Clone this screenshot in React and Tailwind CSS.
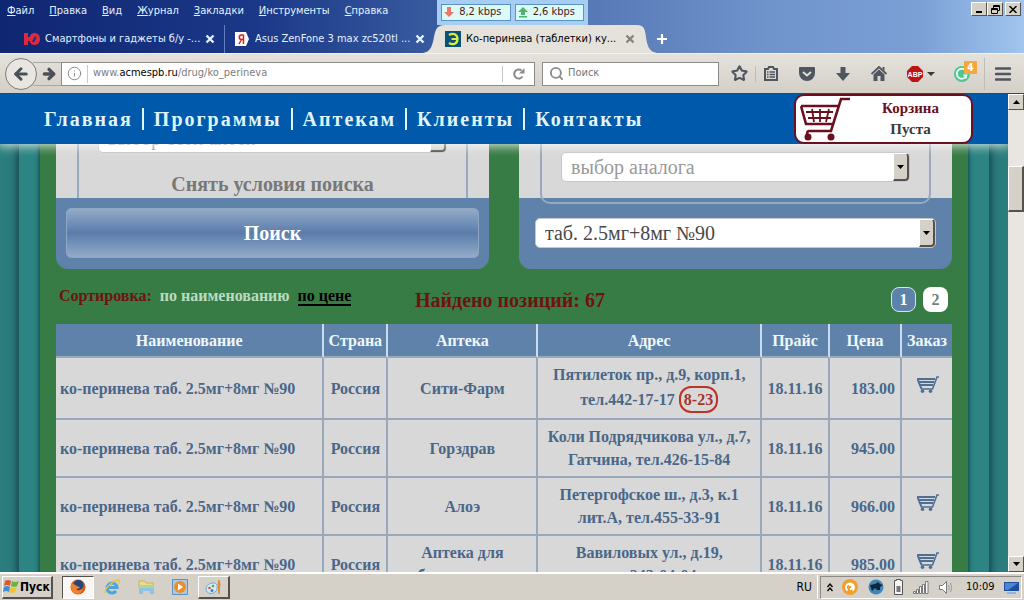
import React from 'react';
import { ArrowLeft, ArrowRight, Info, Search, Star } from 'lucide-react';

const MENU = ['Файл', 'Правка', 'Вид', 'Журнал', 'Закладки', 'Инструменты', 'Справка'];

const NAV = ['Главная', 'Программы', 'Аптекам', 'Клиенты', 'Контакты'];

const OFFERS = [
  { id: 1, pharmacy: ['Сити-Фарм'], address: ['Пятилеток пр., д.9, корп.1,', 'тел.442-17-17'], hours: '8-23', price: '183.00', order: true },
  { id: 2, pharmacy: ['Горздрав'], address: ['Коли Подрядчикова ул., д.7,', 'Гатчина, тел.426-15-84'], price: '945.00', order: false },
  { id: 3, pharmacy: ['Алоэ'], address: ['Петергофское ш., д.3, к.1', 'лит.А, тел.455-33-91'], price: '966.00', order: true },
  { id: 4, pharmacy: ['Аптека для', 'бережливых'], address: ['Вавиловых ул., д.19,', 'тел.243-04-04'], price: '985.00', order: true }
];

const raised = 'border border-t-white border-l-white border-r-[#55524c] border-b-[#55524c] bg-[#d5d1c9]';

const Triangle = ({ up }) => (
  <svg width="7" height="4" viewBox="0 0 7 4">
    <path d={up ? 'M0 4L3.5 0L7 4Z' : 'M0 0H7L3.5 4Z'} fill="#000" />
  </svg>
);

const CloseIcon = ({ color }) => (
  <svg width="10" height="10" viewBox="0 0 10 10">
    <path d="M1.5 1.5L8.5 8.5M8.5 1.5L1.5 8.5" stroke={color} strokeWidth="2.4" />
  </svg>
);

const MenuBar = () => (
  <div className="flex h-[22px] items-start justify-between pr-[3px] pl-[7px]">
    <nav className="flex gap-[15px] pt-1 leading-[14px] text-[#e4f2ff]">
      {MENU.map(item => (
        <button key={item} type="button">
          <span className="underline">{item[0]}</span>{item.slice(1)}
        </button>
      ))}
    </nav>
    <div className="flex pt-[2px]">
      <button type="button" aria-label="Свернуть" className={`flex h-[14px] w-4 items-end justify-center pb-[2px] ${raised}`}>
        <svg width="6" height="2"><path d="M0 0H6V2H0Z" /></svg>
      </button>
      <button type="button" aria-label="Восстановить" className={`mr-[2px] flex h-[14px] w-4 items-center justify-center ${raised}`}>
        <svg width="9" height="9" viewBox="0 0 9 9" fill="none" stroke="#000">
          <path d="M2.5 3V0.5H8.5V5.5H6.5M2.5 1.5H8.5M0.5 3.5H6.5V8.5H0.5ZM0.5 4.5H6.5" />
        </svg>
      </button>
      <button type="button" aria-label="Закрыть" className={`flex h-[14px] w-4 items-center justify-center ${raised}`}>
        <svg width="8" height="7" viewBox="0 0 8 7"><path d="M0.5 0L7.5 7M7.5 0L0.5 7" stroke="#000" strokeWidth="1.5" /></svg>
      </button>
    </div>
  </div>
);

// Floating network meter of the desktop, drawn over the browser window
const SpeedMeter = () => (
  <div className="absolute top-0 left-[437px] flex h-[25px] w-[151px] items-center gap-1 bg-[#a6cdf3] px-1 text-[#4c1a17]">
    <div className="flex h-[17px] flex-1 items-center justify-between border border-[#5b93c4] bg-[#dcfaf8] pr-2 pl-[2px]">
      <svg width="10" height="11" viewBox="0 0 10 11"><path d="M3 0H7V5H10L5 10L0 5H3Z" fill="#ea7a66" /></svg>
      8,2 kbps
    </div>
    <div className="flex h-[17px] flex-1 items-center justify-between border border-[#5b93c4] bg-[#dcfaf8] pr-2 pl-[2px]">
      <svg width="10" height="11" viewBox="0 0 10 11"><path d="M3 8V5H0L5 0L10 5H7V8ZM1 9H9V10.5H1Z" fill="#4cb56a" /></svg>
      2,6 kbps
    </div>
  </div>
);

const TabStrip = () => (
  <div className="flex h-[31px] items-end text-[#e4f2ff]">
    <div className="flex h-7 w-[225px] items-center border-r border-[#5f7fc0] pl-6">
      <svg width="16" height="12" viewBox="0 0 16 12">
        <path d="M0 0H4V4H5.5C6.5 1.500 8 0 10.5 0C14 0 16 2.500 16 6S14 12 10.5 12C8 12 6.500 10.500 5.500 8H4V12H0Z" fill="#e0293c" />
        <path d="M8 8.5L11 3L12.5 5L10 9.500Z" fill="#1c3580" />
      </svg>
      <span className="ml-[5px] flex-1 truncate">Смартфоны и гаджеты б/у -...</span>
      <button type="button" aria-label="Закрыть вкладку" className="mr-[9px]"><CloseIcon color="#e4f2ff" /></button>
    </div>
    <div className="flex h-7 w-[206px] items-center pl-[10px]">
      <svg width="14" height="14" viewBox="0 0 14 14">
        <path d="M0 0H11L14 7L11 14H0Z" fill="#fff" />
        <path d="M8.5 2.5V12M8.5 3H6.5C3.5 3 3.5 7.5 6.5 7.5H8.5M6.5 7.5L4 12" fill="none" stroke="#d8201c" strokeWidth="1.5" />
      </svg>
      <span className="ml-[6px] flex-1 truncate">Asus ZenFone 3 max zc520tl ...</span>
      <button type="button" aria-label="Закрыть вкладку" className="mr-[6px]"><CloseIcon color="#e4f2ff" /></button>
    </div>
    <svg width="14" height="28" viewBox="0 0 14 28" className="-ml-2 w-[22px]" preserveAspectRatio="none">
      <path d="M0 28C5 27 6 20 7 12C8 4 9 0 14 0V28Z" fill="#e5e2dc" />
    </svg>
    <div className="flex h-7 w-[192px] items-center bg-[#e5e2dc] text-black">
      <svg width="16" height="16" viewBox="0 0 16 16">
        <path d="M0 0H16V16H0Z" fill="#0b5078" />
        <path d="M4 4C8 1.500 12.500 3 12.500 8S8 14.500 4 12M6.500 8H12" fill="none" stroke="#d9f03a" strokeWidth="2.2" />
      </svg>
      <span className="ml-[5px] flex-1 truncate">Ко-перинева (таблетки) ку...</span>
      <button type="button" aria-label="Закрыть вкладку" className="mr-[2px]"><CloseIcon color="#85837f" /></button>
    </div>
    <svg width="20" height="28" viewBox="0 0 20 28"><path d="M0 0C7 0 8 4 9 12C10 20 12 27 20 28H0Z" fill="#e5e2dc" /></svg>
    <button type="button" aria-label="Новая вкладка" className="flex h-7 w-3 items-center">
      <svg width="10" height="10" viewBox="0 0 10 10"><path d="M5 0V10M0 5H10" stroke="#fff" strokeWidth="2.2" /></svg>
    </button>
  </div>
);

const ToolButton = ({ label, children }) => (
  <button type="button" aria-label={label} className="flex h-8 w-9 items-center justify-center">
    {children}
  </button>
);

const Toolbar = () => (
  <div className="flex h-[41px] shrink-0 items-center border-t border-b border-t-[#f4f2ee] border-b-[#14507f] bg-linear-to-b from-[#e5e2dc] to-[#d4d0c8] pr-[3px] pl-[5px] text-[#6b6b6b]">
    <button type="button" aria-label="Назад" className="z-10 flex size-8 items-center justify-center rounded-full border border-[#7d7c79] bg-[#e9e6e1]">
      <ArrowLeft size={18} strokeWidth={4} color="#4a5058" />
    </button>
    <button type="button" aria-label="Вперёд" className="-ml-1 flex h-6 w-7 items-center justify-center border-t border-b border-[#a9a7a2] pl-1">
      <ArrowRight size={16} strokeWidth={5} color="#4a5058" />
    </button>
    <div className="flex h-6 min-w-0 flex-1 items-center border border-[#8c8a86] bg-white">
      <Info size={15} strokeWidth={1.6} color="#8d8d8d" className="mx-[5px]" />
      <div className="flex h-[18px] flex-1 items-center border-l border-[#c9c9c9] pl-[5px]">
        <a href="#address" className="text-[#7d7d7d]">www.<span className="text-black">acmespb.ru</span>/drug/ko_perineva</a>
      </div>
      <button type="button" aria-label="Обновить" className="flex h-4 w-8 items-center justify-center border-l border-[#c4c4c4]">
        <svg width="12" height="12" viewBox="0 0 12 12">
          <path d="M9.5 8.5A4.5 4.5 0 1 1 8.5 2.5" fill="none" stroke="#8b8b8b" strokeWidth="2" />
          <path d="M11.5 0V5.5H6Z" fill="#8b8b8b" />
        </svg>
      </button>
    </div>
    <label className="ml-[7px] flex h-6 w-[177px] items-center border border-[#8c8a86] bg-white pl-[6px]">
      <Search size={15} strokeWidth={3} color="#8b8b8b" className="shrink-0" />
      <input type="text" placeholder="Поиск" aria-label="Поиск в сети" className="ml-[4px] w-full outline-none placeholder:text-[#777]" />
    </label>
    <ToolButton label="Добавить закладку"><Star size={17} strokeWidth={3} color="#50565e" className="ml-1" /></ToolButton>
    <div className="h-4 w-px bg-[#b3c2b0]" />
    <ToolButton label="Закладки">
      <svg width="14" height="15" viewBox="0 0 14 15" className="-ml-[6px]">
        <path d="M1 3H4L5 1H9L10 3H13V14H1Z" fill="none" stroke="#50565e" strokeWidth="2" />
        <path d="M3 6H4.5M3 8.5H4.5M3 11H4.5M5.5 6H11M5.5 8.5H11M5.5 11H11" stroke="#50565e" strokeWidth="1.4" />
      </svg>
    </ToolButton>
    <ToolButton label="Pocket">
      <svg width="16" height="14" viewBox="0 0 16 14" className="-ml-[6px]">
        <path d="M1 0H15Q16 0 16 1V6A8 8 0 0 1 0 6V1Q0 0 1 0Z" fill="#50565e" />
        <path d="M4 5L8 8.5L12 5" fill="none" stroke="#e0ddd6" strokeWidth="2" />
      </svg>
    </ToolButton>
    <ToolButton label="Загрузки">
      <svg width="14" height="14" viewBox="0 0 14 14" className="-ml-[6px]"><path d="M4.5 0H9.5V6H14L7 14L0 6H4.5Z" fill="#50565e" /></svg>
    </ToolButton>
    <ToolButton label="Домой">
      <svg width="16" height="15" viewBox="0 0 16 15" className="-ml-[6px]">
        <path d="M0.5 8L8 1L15.5 8" fill="none" stroke="#50565e" strokeWidth="1.8" />
        <path d="M2.5 8.5L8 3.5L13.5 8.5V15H9.5V10H6.5V15H2.5ZM11.5 1H13.5V5L11.5 3Z" fill="#50565e" />
      </svg>
    </ToolButton>
    <ToolButton label="Adblock Plus">
      <svg width="29" height="16" viewBox="0 0 29 16" className="ml-[6px] shrink-0">
        <path d="M5 0H11L16 5V11L11 16H5L0 11V5Z" fill="#c01414" />
        <text x="8" y="11" textAnchor="middle" fontSize="7" fontWeight="bold" fontFamily="Liberation Sans, sans-serif" fill="#fff">ABP</text>
        <path d="M20 6H28L24 10Z" fill="#3a3a3a" />
      </svg>
    </ToolButton>
    <button type="button" aria-label="Grammarly" className="relative ml-2 flex h-8 w-9 items-center justify-center">
      <svg width="16" height="16" viewBox="0 0 16 16">
        <circle cx="8" cy="8" r="8" fill="#52c493" />
        <path d="M12 5A5 5 0 1 0 12.5 9.5H9.5M12 9V12.5" fill="none" stroke="#e6faf0" strokeWidth="1.8" />
      </svg>
      <span className="absolute top-[3px] right-[3px] flex size-[13px] items-center justify-center bg-[#f7a73c] text-[10px] font-bold text-white">4</span>
    </button>
    <div className="ml-1 h-8 w-px bg-[#c0bdb6]" />
    <ToolButton label="Меню">
      <svg width="16" height="14" viewBox="0 0 16 14"><path d="M1 1.5H15M1 7H15M1 12.5H15" stroke="#50565e" strokeWidth="2.6" strokeLinecap="round" /></svg>
    </ToolButton>
  </div>
);

const BigCart = () => (
  <svg width="50" height="44" viewBox="0 0 50 44" fill="none" stroke="#6b1020">
    <path d="M50 2H41L31 34H9Q7 34 7 38" strokeWidth="2.6" />
    <path d="M1 9H38M1 9L6 27H33" strokeWidth="2.6" />
    <path d="M6 15H33M8 21H31M12 12L14 25M20 12V25M29 12L26 25" strokeWidth="1.8" />
    <circle cx="8" cy="40" r="3.5" fill="#6b1020" stroke="none" />
    <circle cx="31" cy="40" r="3.5" fill="#6b1020" stroke="none" />
  </svg>
);

const SmallCart = () => (
  <svg width="22" height="17" viewBox="0 0 22 17" fill="none" stroke="#4f6f93">
    <path d="M22 1H20L15.5 13H4" strokeWidth="1.6" />
    <path d="M0 3H18M1 6H17M2 9H16M0.5 3L4.5 13" strokeWidth="2" />
    <circle cx="5.5" cy="15.2" r="1.8" fill="#4f6f93" stroke="none" />
    <circle cx="13.5" cy="15.2" r="1.8" fill="#4f6f93" stroke="none" />
  </svg>
);

const SiteHeader = () => (
  <header className="z-10 flex h-[50px] shrink-0 items-center justify-between bg-[#0059ab] pr-[35px] pl-[34px] shadow-[0_0_10px_2px_rgba(255,255,255,0.8)]">
    <nav className="flex text-[20px] leading-[22px] font-bold tracking-[2px] text-[#dff5fb]">
      {NAV.map(item => (
        <a key={item} href="#nav" className="border-r-2 border-[#dff5fb] pr-[9px] pl-[10px] last:border-r-0">{item}</a>
      ))}
    </nav>
    <a href="#cart" className="flex h-full w-[179px] items-center rounded-[10px] border-2 border-[#6b1020] bg-white pl-1">
      <BigCart />
      <span className="flex-1 text-center text-[15px] leading-[21px] font-bold text-[#3a3a3a]">
        <span className="block text-[#6b1020]">Корзина</span>
        Пуста
      </span>
    </a>
  </header>
);

const SelectBox = ({ label, value, muted }) => (
  <div className="flex h-[30px] w-full shrink-0 rounded-[5px] border border-[#c3c7cc] bg-white">
    <select
      aria-label={label}
      className={`min-w-0 flex-1 appearance-none pl-[9px] text-[20px] leading-[26px] outline-none ${muted ? 'text-[#9a9a9a]' : 'text-[#484848]'}`}
    >
      <option>{value}</option>
    </select>
    <span className={`flex w-4 items-center justify-center rounded-r-[4px] border-r-2 border-b-2 ${raised}`}>
      <Triangle />
    </span>
  </div>
);

const SearchPanels = () => (
  <div className="flex gap-[30px]">
    <section className="flex h-[125px] flex-1 flex-col rounded-b-[12px] bg-linear-to-b from-[#d8d8d8] from-[54px] to-[#5f82ab] to-[54px]">
      <div className="mx-[21px] flex h-[54px] flex-col justify-end overflow-hidden border-x-2 border-[#98a9bb] px-[19px]">
        <SelectBox label="Сеть аптек" value="выбор сети аптек" muted />
        <button type="button" className="h-[45px] shrink-0 pt-4 text-[20px] leading-[28px] font-bold text-[#787878]">Снять условия поиска</button>
      </div>
      <div className="px-[10px] pt-[10px]">
        <button
          type="submit"
          className="h-[50px] w-full rounded-[5px] border border-[#8fa6c3] bg-linear-to-b from-[#93abc8] via-[#5b7cab] to-[#93abc8] text-[20px] font-bold text-white"
        >
          Поиск
        </button>
      </div>
    </section>
    <section className="flex h-[125px] flex-1 flex-col rounded-b-[12px] bg-linear-to-b from-[#d8d8d8] from-[54px] to-[#5f82ab] to-[54px]">
      <div className="mx-[21px] flex h-[60px] shrink-0 rounded-b-[10px] border-x-2 border-b-2 border-[#98a9bb] px-[19px] pt-2">
        <SelectBox label="Аналог" value="выбор аналога" muted />
      </div>
      <div className="px-4 pt-[14px]">
        <SelectBox label="Форма выпуска" value="таб. 2.5мг+8мг №90" />
      </div>
    </section>
  </div>
);

const SortRow = () => (
  <div className="flex h-[55px] items-center pt-[6px] pr-1 pl-[3px] font-bold">
    <div className="flex w-[356px] gap-2 pb-[6px] text-[16px] leading-[17px]">
      <span className="text-[#6e1410]">Сортировка:</span>
      <a href="#by-name" className="text-[#b9dcc0]">по наименованию</a>
      <a href="#by-price" className="border-b-2 border-black text-black">по цене</a>
    </div>
    <h2 className="flex-1 text-[20px] leading-[22px] text-[#6e1410]">Найдено позиций: 67</h2>
    <div className="flex gap-[7px] text-[16px]">
      <button type="button" className="size-[25px] rounded-[8px] border border-[#d5e4f5] bg-[#5f82ab] text-white">1</button>
      <button type="button" className="size-[25px] rounded-[8px] bg-white text-[#6e8379]">2</button>
    </div>
  </div>
);

const head = 'h-[34px] border-r-2 border-b-2 border-r-[#c9dbee] border-b-[#98a9bb] last:border-r-0';
const cell = 'h-[58px] border-r-2 border-b-2 border-[#98a9bb] py-[5px] last:border-r-0';

const OffersTable = () => (
  <table className="w-full table-fixed border-separate border-spacing-0 text-center text-[16px] leading-[23px] font-bold">
    <colgroup>
      <col className="w-[30%]" />
      <col className="w-[64px]" />
      <col className="w-[150px]" />
      <col className="w-[25%]" />
      <col className="w-[68px]" />
      <col className="w-[72px]" />
      <col className="w-[50px]" />
    </colgroup>
    <thead className="bg-[#5f82ab] text-[#eef8fb]">
      <tr>
        <th className={head}>Наименование</th>
        <th className={head}>Страна</th>
        <th className={head}>Аптека</th>
        <th className={head}>Адрес</th>
        <th className={head}>Прайс</th>
        <th className={head}>Цена</th>
        <th className={head}>Заказ</th>
      </tr>
    </thead>
    <tbody className="bg-[#d8d8d8] text-[#4a6788]">
      {OFFERS.map(offer => (
        <tr key={offer.id}>
          <td className={`${cell} pl-1 text-left whitespace-nowrap`}>ко-перинева таб. 2.5мг+8мг №90</td>
          <td className={cell}>Россия</td>
          <td className={cell}>{offer.pharmacy.map(line => <div key={line}>{line}</div>)}</td>
          <td className={`${cell} whitespace-nowrap`}>
            <div>{offer.address[0]}</div>
            <div>
              {offer.address[1]}
              {offer.hours && (
                <span className="ml-1 inline-block rounded-[12px] border-2 border-[#b8352a] px-[3px] text-[#a3352a]">{offer.hours}</span>
              )}
            </div>
          </td>
          <td className={cell}>18.11.16</td>
          <td className={`${cell} pr-[5px] text-right`}>{offer.price}</td>
          <td className={`${cell} pl-px`}>
            {offer.order && (
              <button type="button" aria-label="Заказать" className="pb-2 align-middle"><SmallCart /></button>
            )}
          </td>
        </tr>
      ))}
    </tbody>
  </table>
);

const ScrollBar = () => (
  <div className="flex w-4 shrink-0 flex-col bg-[#e9e6e1]">
    <button type="button" aria-label="Вверх" className={`flex h-4 items-center justify-center ${raised}`}><Triangle up /></button>
    <div className="flex-1 pt-14">
      <div className={`h-[46px] border-r-2 border-b-2 ${raised}`} />
    </div>
    <button type="button" aria-label="Вниз" className={`flex h-4 items-center justify-center ${raised}`}><Triangle /></button>
  </div>
);

const TaskBar = () => (
  <footer className="flex h-7 shrink-0 items-center border-t-2 border-white bg-[#d5d1c9] px-[2px] text-[12px] text-black">
    <button type="button" className={`flex h-[23px] w-[51px] items-center gap-[1px] border-r-2 border-b-2 font-bold ${raised}`}>
      <svg width="16" height="15" viewBox="0 0 16 15">
        <path d="M2 2Q5 0 8 2L7 7Q4 5 1 7Z" fill="#e3562c" />
        <path d="M9 2Q12 4 16 2L14 7Q11 9 8 7Z" fill="#6cb33e" />
        <path d="M1 8Q4 6 7 8L6 13Q3 11 0 13Z" fill="#3f8fd8" />
        <path d="M8 8Q11 10 14 8L12 13Q9 15 6 13Z" fill="#f4c22c" />
      </svg>
      Пуск
    </button>
    <button type="button" aria-label="Firefox" className="ml-[9px] flex h-[23px] w-8 items-center justify-center border border-t-[#55524c] border-r-white border-b-white border-l-[#55524c] bg-[#f8f7f5]">
      <svg width="16" height="16" viewBox="0 0 16 16">
        <circle cx="8" cy="8" r="7.5" fill="#d9541e" />
        <circle cx="8.5" cy="6" r="5" fill="#23477c" />
        <path d="M1 4Q4 5 7 7Q10 8 10 9Q7 9 6 11Q10 13 13 9Q12 14 8 15Q1 15 1 8Z" fill="#f0842a" />
      </svg>
    </button>
    <button type="button" aria-label="Internet Explorer" className="flex w-9 items-center justify-center">
      <svg width="17" height="16" viewBox="0 0 17 16" fill="none">
        <path d="M3.5 8.5H13A5 5 0 1 0 12 12" stroke="#4aa5dc" strokeWidth="3" />
        <path d="M1 14C0 10 9 1 15 1C17 2 15 4 14 5" stroke="#e8c340" strokeWidth="1.3" />
      </svg>
    </button>
    <button type="button" aria-label="Проводник" className="flex w-8 items-center justify-center">
      <svg width="17" height="15" viewBox="0 0 17 15">
        <path d="M1 1H7L8 3H15V8H1Z" fill="#ecdc8a" stroke="#c9b25a" />
        <path d="M2 5H15L16 9H1Z" fill="#a7d99a" />
        <path d="M1 14V9Q1 8 3 8H14Q16 8 16 9V14H12V11H5V14Z" fill="#8cc3e6" />
      </svg>
    </button>
    <button type="button" aria-label="Проигрыватель" className="flex w-9 items-center justify-center">
      <svg width="16" height="16" viewBox="0 0 16 16">
        <path d="M0.5 0.5H15.5V15.5H0.5Z" fill="#a8cce8" stroke="#5c93c2" />
        <circle cx="8" cy="8" r="6" fill="#ef8e24" />
        <path d="M6 4.5L11 8L6 11.5Z" fill="#fff" />
      </svg>
    </button>
    <button type="button" aria-label="Paint" className={`flex h-[23px] w-8 items-center justify-center border-r-2 border-b-2 ${raised}`}>
      <svg width="17" height="16" viewBox="0 0 17 16">
        <path d="M7 4C13 3 13 9 11 12C8 16 1 15 1 10C1 7 3 5 7 4Z" fill="#d3eaf6" stroke="#6fa6c9" />
        <circle cx="4.5" cy="9" r="1.3" fill="#d4553b" />
        <circle cx="8" cy="7" r="1.3" fill="#59a84b" />
        <circle cx="7" cy="11.5" r="1.5" fill="#3e7fc4" />
        <path d="M14 1L15 5L14 15L13 5Z" fill="#e58a2c" stroke="#e58a2c" />
      </svg>
    </button>
    <div className="ml-auto pr-[5px]">RU</div>
    <div className="flex h-6 items-center border-l border-white pl-[2px]">
      <div className="flex h-[23px] w-[202px] items-center justify-between border border-t-[#8c8a86] border-r-white border-b-white border-l-[#8c8a86] pr-[2px] pl-[6px]">
        <svg width="6" height="9" viewBox="0 0 6 9"><path d="M0.5 4L3 1L5.5 4M0.5 8L3 5L5.5 8" fill="none" stroke="#000" strokeWidth="1.3" /></svg>
        <svg width="16" height="16" viewBox="0 0 16 16">
          <circle cx="8" cy="8" r="8" fill="#f0a02c" />
          <path d="M5.5 11.5A4 4 0 1 1 10.5 11.5M8 10A2 2 0 1 0 7 6.5" fill="none" stroke="#fff" strokeWidth="1.8" />
        </svg>
        <svg width="16" height="16" viewBox="0 0 16 16">
          <circle cx="8" cy="8" r="7.5" fill="#3f86b8" />
          <path d="M2 6L7 5L10 3L12 5L15 6L12 8V11H9L7 9L4 12L3 9Z" fill="#10263c" />
        </svg>
        <svg width="11" height="16" viewBox="0 0 11 16">
          <path d="M3.5 1.5V0.5H7.5V1.5H9.5V15.5H1.5V1.5Z" fill="#f5f5f5" stroke="#555" />
          <path d="M3.5 7H7.5V13H3.5Z" fill="#777" />
        </svg>
        <svg width="16" height="13" viewBox="0 0 16 13" fill="#fff" stroke="#777">
          <path d="M0.5 10.5H2.5V12.5H0.5ZM3.5 8.5H5.5V12.5H3.5ZM6.5 5.5H8.5V12.5H6.5ZM9.5 3.5H11.5V12.5H9.5ZM12.5 0.5H15V12.5H12.5Z" />
        </svg>
        <svg width="14" height="13" viewBox="0 0 14 13">
          <path d="M0.5 4.5H3.5L7.5 0.5V12.5L3.5 8.5H0.5Z" fill="#fff" stroke="#777" />
          <path d="M9.5 4Q11 6.5 9.5 9M11.5 2Q14 6.5 11.5 11" fill="none" stroke="#999" />
        </svg>
        <time className="ml-1 text-[11px]">10:09</time>
        <svg width="15" height="13" viewBox="0 0 15 13">
          <path d="M0 1H15V10H0Z" fill="#1d4f9e" />
          <path d="M1 2H14L4 9H1Z" fill="#4b86d6" />
          <path d="M3 12H12" stroke="#8fb4e0" strokeWidth="2" />
        </svg>
      </div>
    </div>
  </footer>
);

const App = () => (
  <div className="relative flex h-screen flex-col overflow-hidden bg-[#d5d1c9] font-['DejaVu_Sans_Condensed','DejaVu_Sans',sans-serif] text-[11px]">
    <div className="shrink-0 bg-[linear-gradient(90deg,#0f2672_0%,#1b3888_25%,#375a9f_42%,#5375b3_55%,#6f93cb_75%,#7ba0d6_90%,#a1c5ee_100%)]">
      <MenuBar />
      <TabStrip />
    </div>
    <SpeedMeter />
    <Toolbar />

    <div className="flex min-h-0 flex-1">
      <div className="flex min-w-0 flex-1 flex-col overflow-hidden font-['Liberation_Serif',serif]">
        <SiteHeader />
        <div className="min-h-0 flex-1 bg-[#2c7e7e] px-[19px]">
          <div className="bg-[#2c8583] px-[21px] shadow-[0_0_10px_rgba(0,20,30,0.8)]">
            <main className="bg-[#387c45] px-4 shadow-[0_0_5px_rgba(0,20,30,0.8)]">
              <SearchPanels />
              <SortRow />
              <OffersTable />
            </main>
          </div>
        </div>
      </div>
      <ScrollBar />
    </div>

    <TaskBar />
  </div>
);

export default App;
